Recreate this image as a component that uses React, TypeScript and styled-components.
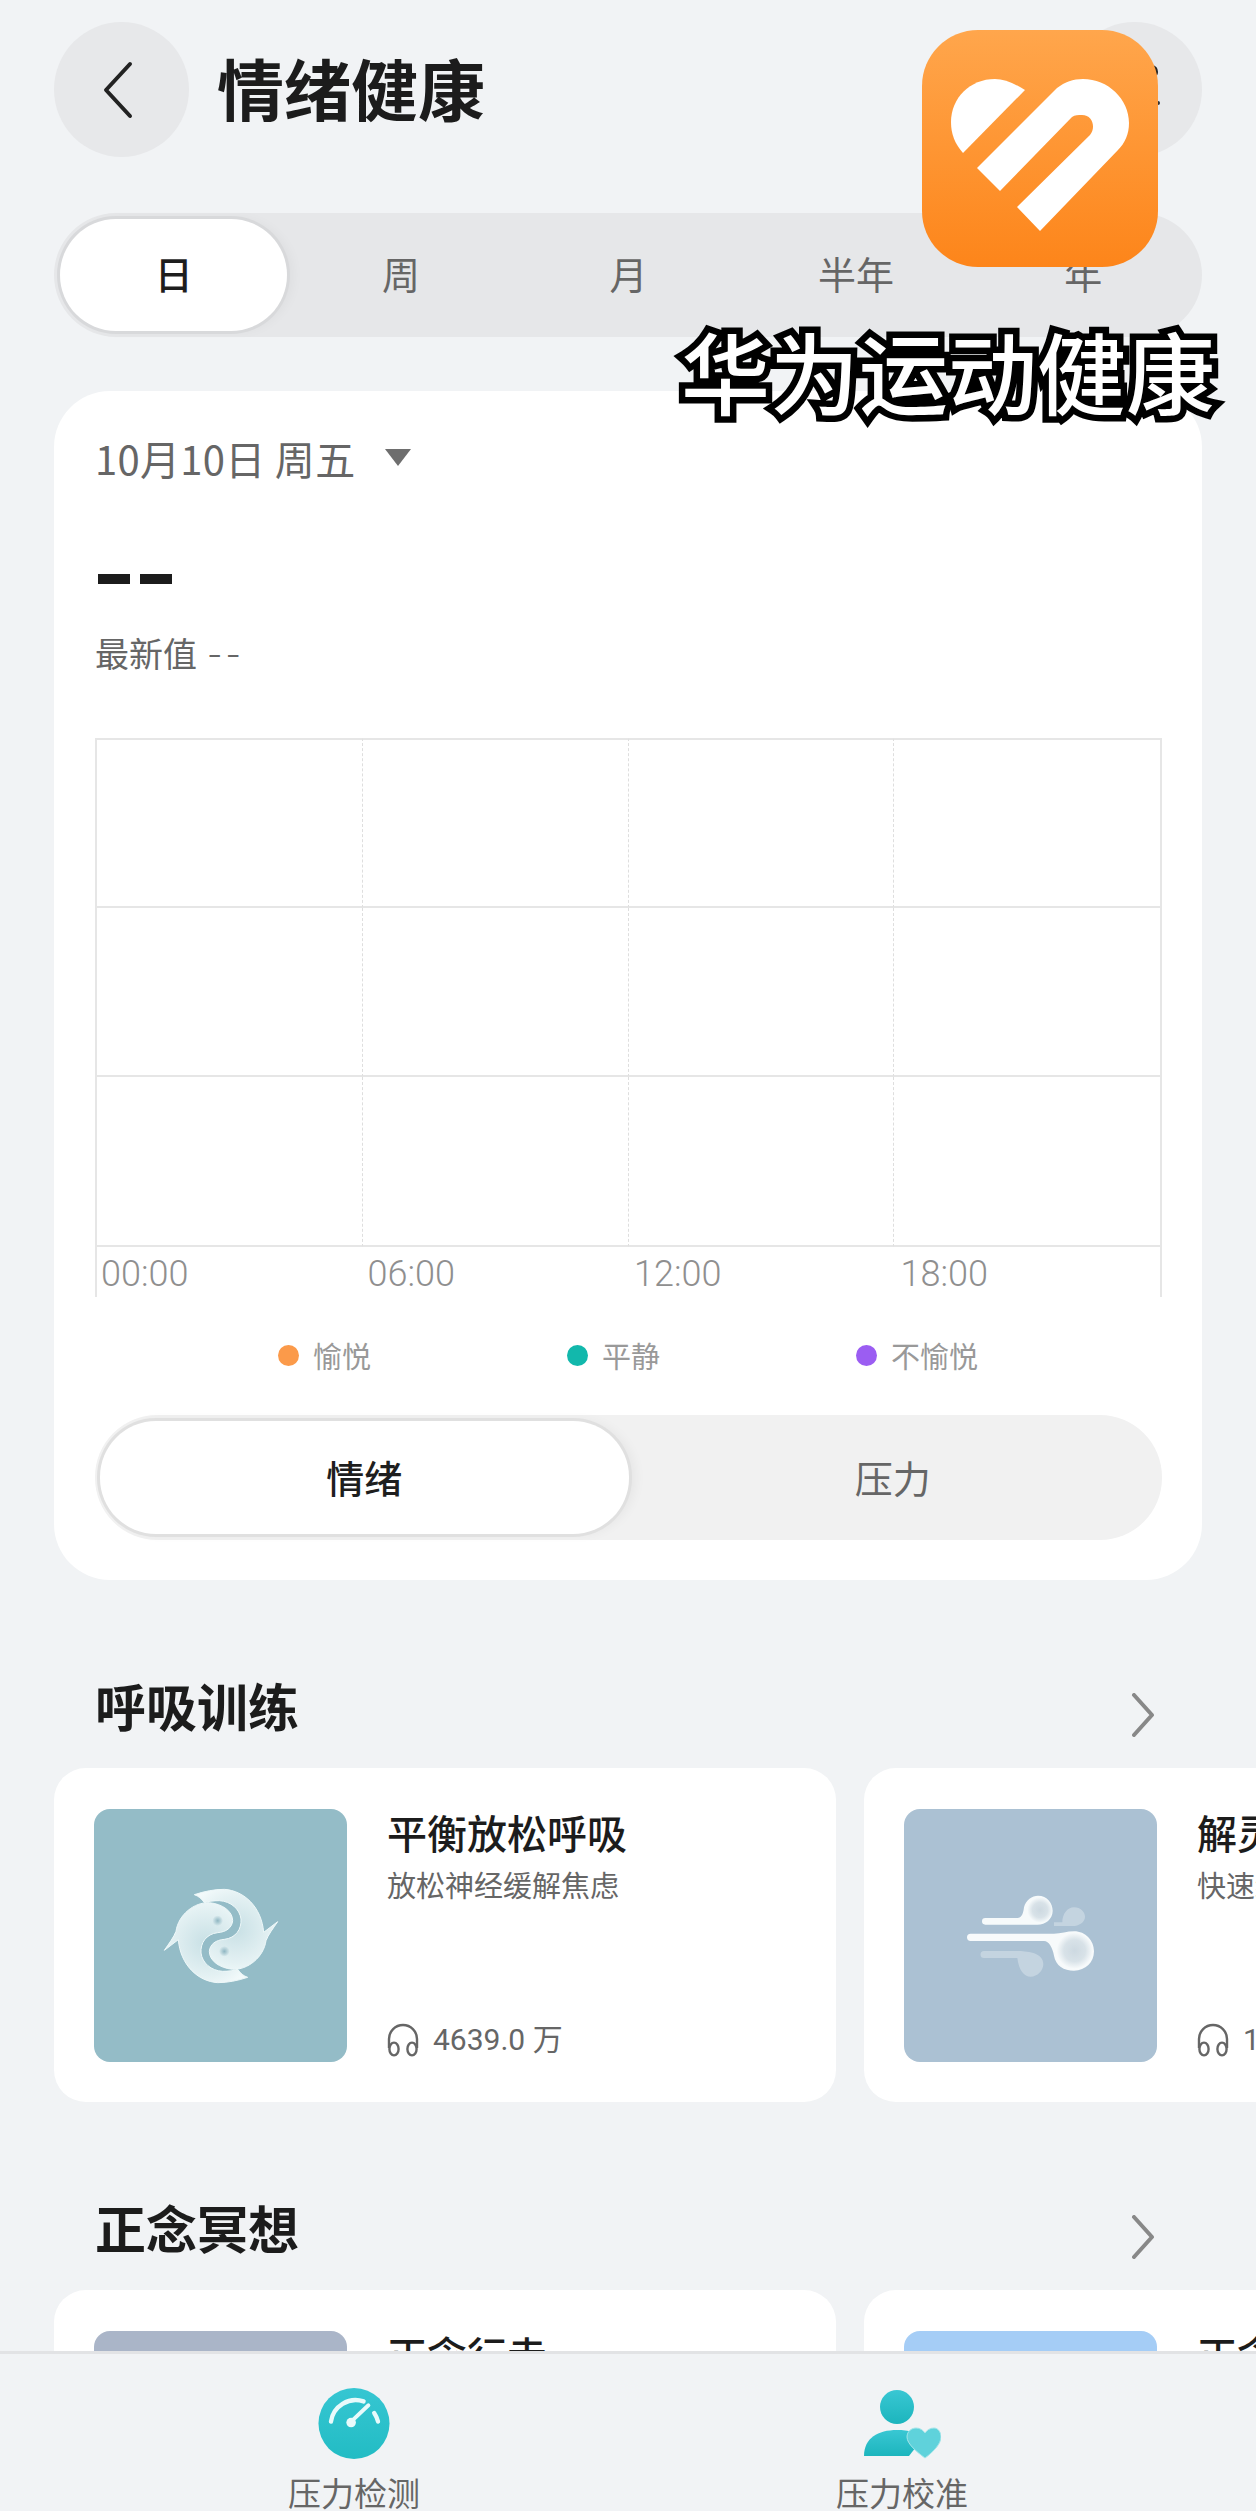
import React from 'react';
import styled, { createGlobalStyle } from 'styled-components';

const GlobalStyle = createGlobalStyle`
  html, body {
    margin: 0;
    padding: 0;
    background: #f1f3f5;
  }
  * {
    box-sizing: border-box;
  }
`;

const FONT = `"Noto Sans CJK SC", "Noto Sans", sans-serif`;
const LATIN = `Roboto, "Noto Sans CJK SC", sans-serif`;

const TABS = ['日', '周', '月', '半年', '年'];
const TIMES = ['00:00', '06:00', '12:00', '18:00'];
const LEGEND = [
  { label: '愉悦', color: '#fb9a4a' },
  { label: '平静', color: '#12b8ac' },
  { label: '不愉悦', color: '#9b5df2' }
];

const Back = () => (
  <svg width='32' height='58' viewBox='0 0 32 58' fill='none'>
    <path d='M28 3 L4 29 L28 55' stroke='#222' strokeWidth='4' strokeLinecap='round' strokeLinejoin='round' />
  </svg>
);

const More = () => (
  <svg width='24' height='44' viewBox='0 0 24 44' fill='none'>
    <path d='M14 2 Q20 3 20 9 Q20 14 15 14' fill='#222' />
    <circle cx='20' cy='40' r='2' fill='#333' />
  </svg>
);

const Chevron = () => (
  <svg width='24' height='44' viewBox='0 0 24 44' fill='none'>
    <path d='M3 2 L21 22 L3 42' stroke='#888' strokeWidth='4' strokeLinecap='round' strokeLinejoin='round' />
  </svg>
);

const Headphone = () => (
  <svg width='32' height='34' viewBox='0 0 32 34' fill='none' stroke='#666' strokeWidth='2.4'>
    <path d='M2 25 V16 a14 14 0 0 1 28 0 V25' />
    <ellipse cx='7' cy='26' rx='4.6' ry='6.4' />
    <ellipse cx='25' cy='26' rx='4.6' ry='6.4' />
  </svg>
);

const FishIcon = () => (
  <svg width='170' height='150' viewBox='-15 1 510 450'>
    <defs>
      <radialGradient id='fish' cx='50%' cy='50%' r='60%'>
        <stop offset='0%' stopColor='#c8e0e5' />
        <stop offset='70%' stopColor='#e4f1f3' />
        <stop offset='100%' stopColor='#f3fafb' />
      </radialGradient>
      <radialGradient id='eye' cx='50%' cy='50%' r='50%'>
        <stop offset='0%' stopColor='#8fb6c2' />
        <stop offset='100%' stopColor='#8fb6c2' stopOpacity='0' />
      </radialGradient>
    </defs>
    {[0, 180].map((angle) => (
      <g key={angle} transform={`rotate(${angle} 240 226)`}>
        <path
          d='M160 102 C190 92 220 86 250 86 C310 90 362 140 368 215 L410 183 C395 205 382 222 375 240 C368 290 320 328 275 326 C235 322 205 300 205 272 C207 250 225 238 250 236 C285 232 302 205 300 175 C296 145 270 122 235 120 C218 120 200 122 190 126 C182 114 172 106 160 102 Z'
          fill='url(#fish)'
          stroke='#eef8f9'
          strokeWidth='3'
        />
        <circle cx='250' cy='272' r='16' fill='url(#eye)' />
      </g>
    ))}
  </svg>
);

const WindIcon = () => (
  <svg width='170' height='130' viewBox='-14 1 510 390' fill='none'>
    <defs>
      <radialGradient id='bulb' cx='50%' cy='50%' r='50%'>
        <stop offset='0%' stopColor='#cdd9e1' />
        <stop offset='60%' stopColor='#d8e2e8' />
        <stop offset='100%' stopColor='#d8e2e8' stopOpacity='0' />
      </radialGradient>
    </defs>
    <g opacity='0.35'>
      <path d='M310 155 H335 C335 130 350 110 370 110 C390 110 403 125 403 138 C403 155 385 166 365 166 H310 Z' fill='#f4f8fa' />
      <path d='M100 241 H200 C225 241 278 245 278 280 C278 300 260 318 240 318 C220 318 205 300 200 262 H100 A10 10 0 0 1 100 241 Z' fill='#f4f8fa' />
    </g>
    <path
      d='M104 142 H200 C215 142 218 125 220 110 C225 88 245 75 262 75 C290 75 306 98 306 120 C306 145 285 162 260 162 H104 A10 10 0 0 1 104 142 Z'
      fill='#f6fafb'
    />
    <circle cx='268' cy='118' r='38' fill='url(#bulb)' />
    <path
      d='M60 189 H310 C330 189 350 182 370 182 C405 182 430 210 430 242 C430 275 405 300 370 300 C340 300 315 285 310 255 C306 232 295 211 280 211 H60 A11 11 0 0 1 60 189 Z'
      fill='#f7fafb'
    />
    <circle cx='372' cy='240' r='54' fill='url(#bulb)' />
  </svg>
);

const AppLogo = () => (
  <svg width='236' height='237' viewBox='0 0 236 237'>
    <defs>
      <linearGradient id='logo' x1='0' y1='0' x2='0' y2='1'>
        <stop offset='0%' stopColor='#ffa64c' />
        <stop offset='100%' stopColor='#fd851a' />
      </linearGradient>
    </defs>
    <rect width='236' height='237' rx='56' fill='url(#logo)' />
    <path d='M103 60 C92 53 82 49 73 49 C48 49 29 68 29 92 C29 104 33 114 41 123 Z' fill='#fff' />
    <path
      d='M55 138 L135 58 C143 52 151 49 161 49 C186 49 207 69 207 93 C207 104 203 113 196 120 L118 201 L95 177 L168 105 C174 98 171 85 160 85 C156 85 153 85 150 87 L78 161 Z'
      fill='#fff'
    />
  </svg>
);

const GaugeIcon = () => (
  <svg width='76' height='76' viewBox='0 0 76 76' fill='none'>
    <defs>
      <linearGradient id='teal' x1='0' y1='0' x2='0' y2='1'>
        <stop offset='0%' stopColor='#36c6d2' />
        <stop offset='100%' stopColor='#22bcc4' />
      </linearGradient>
    </defs>
    <circle cx='38' cy='38' r='37' fill='url(#teal)' />
    <path d='M14 36 A26 26 0 0 1 48 15' stroke='#e8fafb' strokeWidth='4.5' strokeLinecap='round' />
    <path d='M59 27 A26 26 0 0 1 63 36' stroke='#e8fafb' strokeWidth='4.5' strokeLinecap='round' />
    <path d='M35 36 L53 19' stroke='#e8fafb' strokeWidth='4' strokeLinecap='round' />
    <circle cx='35' cy='37' r='5' fill='#e8fafb' />
  </svg>
);

const CalibrateIcon = () => (
  <svg width='78' height='70' viewBox='0 0 78 70' fill='none'>
    <defs>
      <linearGradient id='person' x1='0' y1='0' x2='0' y2='1'>
        <stop offset='0%' stopColor='#39c7d3' />
        <stop offset='100%' stopColor='#1cb5bd' />
      </linearGradient>
    </defs>
    <circle cx='34' cy='17' r='17' fill='url(#person)' />
    <path d='M1 66 C1 48 15 40 34 40 C46 40 54 42 60 48 L46 66 Z' fill='url(#person)' />
    <path
      d='M62 68 C54 62 44 54 44 47 C44 41 49 38 53 38 C57 38 60 40 62 43 C64 40 67 38 71 38 C75 38 78 42 78 47 C78 54 70 62 62 68 Z'
      fill='#5fd2db'
      stroke='#a5e6ea'
      strokeWidth='1'
    />
  </svg>
);

const App = () => {
  return (
    <Page>
      <GlobalStyle />
      <Content>
        <Header>
          <RoundButton>
            <Back />
          </RoundButton>
          <PageTitle>情绪健康</PageTitle>
          <RoundButton>
            <More />
          </RoundButton>
        </Header>

        <Tabs>
          {TABS.map((tab, i) => (
            <Tab key={tab} $active={i === 0}>
              {tab}
            </Tab>
          ))}
        </Tabs>

        <MainCard>
          <DateRow>
            10月10日 周五
            <Caret />
          </DateRow>
          <BigValue>
            <Dash />
            <Dash />
          </BigValue>
          <Latest>
            最新值<span>--</span>
          </Latest>

          <Chart>
            {Array.from({ length: 12 }).map((_, i) => (
              <ChartCell key={i} $last={i % 4 === 3} $top={i < 4} />
            ))}
          </Chart>
          <Times>
            {TIMES.map((t) => (
              <span key={t}>{t}</span>
            ))}
          </Times>

          <Legend>
            {LEGEND.map((item) => (
              <LegendItem key={item.label}>
                <Dot $color={item.color} />
                {item.label}
              </LegendItem>
            ))}
          </Legend>

          <Toggle>
            <ToggleItem $active>情绪</ToggleItem>
            <ToggleItem>压力</ToggleItem>
          </Toggle>
        </MainCard>

        <SectionHead>
          <h2>呼吸训练</h2>
          <Chevron />
        </SectionHead>
        <Carousel>
          <ItemCard>
            <Thumb $color='#94bcc7'>
              <FishIcon />
            </Thumb>
            <ItemText>
              <h3>平衡放松呼吸</h3>
              <p>放松神经缓解焦虑</p>
              <Count>
                <Headphone />
                4639.0 万
              </Count>
            </ItemText>
          </ItemCard>
          <ItemCard>
            <Thumb $color='#abc1d3'>
              <WindIcon />
            </Thumb>
            <ItemText>
              <h3>解灵呼吸</h3>
              <p>快速缓解压力</p>
              <Count>
                <Headphone />
                1200.0 万
              </Count>
            </ItemText>
          </ItemCard>
        </Carousel>

        <SectionHead>
          <h2>正念冥想</h2>
          <Chevron />
        </SectionHead>
        <Carousel>
          <ItemCard>
            <Thumb $color='#aab5c8' />
            <ItemText>
              <h3>正念行走</h3>
            </ItemText>
          </ItemCard>
          <ItemCard>
            <Thumb $color='#a5cdf6' />
            <ItemText>
              <h3>正念呼吸</h3>
            </ItemText>
          </ItemCard>
        </Carousel>
      </Content>

      <Footer>
        <FooterItem>
          <GaugeIcon />
          <span>压力检测</span>
        </FooterItem>
        <FooterItem>
          <CalibrateIcon />
          <span>压力校准</span>
        </FooterItem>
      </Footer>

      <LogoBadge>
        <AppLogo />
      </LogoBadge>
      <Caption>华为运动健康</Caption>
    </Page>
  );
};

export default App;

const Page = styled.div`
  position: relative;
  width: 1256px;
  height: 2511px;
  overflow: hidden;
  display: flex;
  flex-direction: column;
  background: #f1f3f5;
  font-family: ${FONT};
`;

const Content = styled.div`
  flex: 1;
  min-height: 0;
  overflow: hidden;
  padding-top: 22px;
`;

const Header = styled.div`
  display: flex;
  align-items: center;
  height: 135px;
  margin: 0 54px;
`;

const RoundButton = styled.div`
  width: 135px;
  height: 135px;
  border-radius: 50%;
  background: #e7e8ea;
  display: flex;
  align-items: center;
  justify-content: center;
  flex-shrink: 0;
  &:last-child {
    justify-content: flex-end;
    padding-right: 40px;
    padding-bottom: 10px;
  }
  &:first-child {
    padding-right: 8px;
  }
`;

const PageTitle = styled.h1`
  flex: 1;
  margin: 0 0 6px 28px;
  font-size: 67px;
  line-height: 72px;
  font-weight: 700;
  color: #1c1c1c;
`;

const Tabs = styled.div`
  display: grid;
  grid-template-columns: repeat(5, 1fr);
  height: 124px;
  margin: 56px 54px 0;
  padding: 6px 5px 6px 6px;
  border-radius: 62px;
  background: #e6e7e9;
`;

const Tab = styled.div<{ $active?: boolean }>`
  display: flex;
  align-items: center;
  justify-content: center;
  padding-bottom: 5px;
  border-radius: 56px;
  font-size: 38px;
  font-weight: ${(p) => (p.$active ? 500 : 400)};
  color: ${(p) => (p.$active ? '#1e1e1e' : '#666')};
  background: ${(p) => (p.$active ? '#fff' : 'transparent')};
  box-shadow: ${(p) => (p.$active ? '0 0 0 3px #d8d9db, 6px 0 12px rgba(0, 0, 0, 0.04)' : 'none')};
`;

const MainCard = styled.section`
  margin: 54px 54px 0;
  height: 1189px;
  padding: 39px 40px 40px 41px;
  border-radius: 56px;
  background: #fff;
`;

const DateRow = styled.div`
  display: flex;
  align-items: center;
  height: 60px;
  padding-bottom: 5px;
  font-size: 40px;
  letter-spacing: 0.3px;
  color: #666;
`;

const Caret = styled.i`
  width: 0;
  height: 0;
  margin-left: 30px;
  border-left: 13px solid transparent;
  border-right: 13px solid transparent;
  border-top: 17px solid #6e6e6e;
`;

const BigValue = styled.div`
  display: flex;
  gap: 10px;
  margin-top: 84px;
  padding-left: 3px;
`;

const Dash = styled.i`
  display: block;
  width: 32px;
  height: 10px;
  background: #1c1c1c;
`;

const Latest = styled.div`
  height: 48px;
  margin-top: 45px;
  font-size: 34px;
  line-height: 48px;
  color: #666;
  span {
    margin-left: 10px;
    font-family: Inter, sans-serif;
    font-weight: 300;
    letter-spacing: 3px;
  }
`;

const Chart = styled.div`
  display: grid;
  grid-template-columns: repeat(4, 1fr);
  grid-template-rows: repeat(3, 1fr);
  height: 509px;
  margin-top: 61px;
  border-left: 2px solid #e6e6e6;
  border-right: 2px solid #e6e6e6;
`;

const ChartCell = styled.div<{ $last?: boolean; $top?: boolean }>`
  border-top: ${(p) => (p.$top ? '2px solid #e6e6e6' : 'none')};
  border-bottom: 2px solid #e6e6e6;
  border-right: ${(p) => (p.$last ? 'none' : '1px dashed #dedede')};
`;

const Times = styled.div`
  display: grid;
  grid-template-columns: repeat(4, 266.5px);
  height: 50px;
  padding: 2px 0 0 4px;
  border-left: 2px solid #e6e6e6;
  border-right: 2px solid #e6e6e6;
  span {
    font-family: ${LATIN};
    font-weight: 300;
    font-size: 36px;
    line-height: 50px;
    color: #8f8f8f;
  }
`;

const Legend = styled.div`
  display: flex;
  height: 40px;
  margin-top: 38px;
  padding-left: 183px;
`;

const LegendItem = styled.div`
  display: flex;
  align-items: center;
  gap: 14px;
  width: 289px;
  font-size: 29px;
  color: #999;
`;

const Dot = styled.i<{ $color: string }>`
  width: 21px;
  height: 21px;
  border-radius: 50%;
  background: ${(p) => p.$color};
`;

const Toggle = styled.div`
  display: grid;
  grid-template-columns: 1fr 1fr;
  height: 125px;
  margin-top: 40px;
  padding: 6px 5px;
  border-radius: 62px;
  background: #f1f1f1;
`;

const ToggleItem = styled.div<{ $active?: boolean }>`
  display: flex;
  align-items: center;
  justify-content: center;
  padding-bottom: 2px;
  border-radius: 56px;
  font-size: 38px;
  font-weight: ${(p) => (p.$active ? 500 : 400)};
  color: ${(p) => (p.$active ? '#1e1e1e' : '#666')};
  background: ${(p) => (p.$active ? '#fff' : 'transparent')};
  box-shadow: ${(p) => (p.$active ? '0 0 0 3px #e0e0e0, 6px 0 12px rgba(0, 0, 0, 0.05)' : 'none')};
`;

const SectionHead = styled.div`
  display: flex;
  align-items: center;
  justify-content: space-between;
  height: 60px;
  margin: 98px 0 0;
  padding: 0 101px 0 95px;
  h2 {
    margin: 0 0 6px;
    font-size: 51px;
    line-height: 54px;
    font-weight: 700;
    color: #1c1c1c;
  }
  svg {
    margin-top: 14px;
  }
`;

const Carousel = styled.div`
  display: flex;
  gap: 28px;
  margin-top: 30px;
  padding-left: 54px;
`;

const ItemCard = styled.article`
  display: flex;
  flex: 0 0 782px;
  gap: 40px;
  height: 334px;
  padding: 41px 40px;
  border-radius: 32px;
  background: #fff;
`;

const Thumb = styled.div<{ $color: string }>`
  display: flex;
  align-items: center;
  justify-content: center;
  flex: 0 0 253px;
  height: 253px;
  border-radius: 16px;
  background: ${(p) => p.$color};
`;

const ItemText = styled.div`
  display: flex;
  flex-direction: column;
  flex: 1;
  white-space: nowrap;
  h3 {
    margin: -3px 0 0;
    font-size: 40px;
    line-height: 52px;
    font-weight: 500;
    color: #1c1c1c;
  }
  p {
    margin: 5px 0 0;
    font-size: 29px;
    line-height: 42px;
    color: #666;
  }
`;

const Count = styled.div`
  display: flex;
  align-items: center;
  gap: 14px;
  margin-top: auto;
  padding-bottom: 3px;
  font-family: ${LATIN};
  font-size: 30px;
  line-height: 36px;
  color: #666;
`;

const Footer = styled.footer`
  display: grid;
  grid-template-columns: 548px 548px;
  justify-content: center;
  flex: 0 0 159px;
  padding-top: 33px;
  border-top: 3px solid #e2e3e5;
  background: #f1f3f5;
`;

const FooterItem = styled.div`
  display: flex;
  flex-direction: column;
  align-items: center;
  justify-content: flex-end;
  height: 124px;
  span {
    margin-top: 9px;
    height: 42px;
    font-size: 33px;
    line-height: 46px;
    color: #666;
  }
`;

const LogoBadge = styled.div`
  position: absolute;
  left: 922px;
  top: 30px;
  width: 236px;
  height: 237px;
`;

const Caption = styled.div`
  position: absolute;
  left: 681px;
  top: 313px;
  font-size: 89px;
  line-height: 114px;
  font-weight: 500;
  color: #fff;
  white-space: nowrap;
  -webkit-text-stroke: 13px #000;
  paint-order: stroke fill;
`;
